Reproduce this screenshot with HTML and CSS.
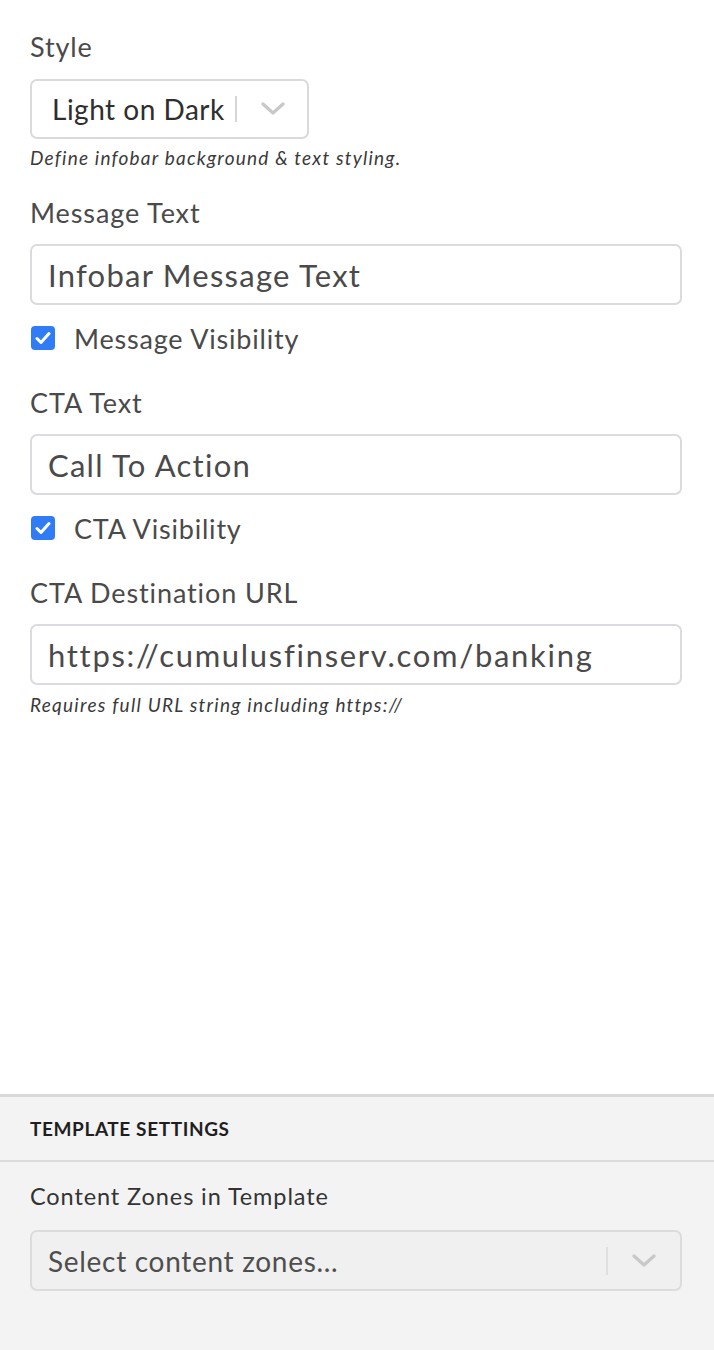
FILE: index.html
```html
<!DOCTYPE html>
<html>
<head>
<meta charset="utf-8">
<link rel="stylesheet" href="styles.css">
</head>
<body>
<div class="page">
  <main class="editor">
    <div class="field-label first">Style</div>
    <div class="select style-select">
      <span class="select-value">Light on Dark</span>
      <span class="select-sep"></span>
      <svg class="chev" width="24" height="14" viewBox="0 0 24 14"><path d="M2 2 L12 11 L22 2" fill="none" stroke="#c8c8c8" stroke-width="3.2" stroke-linecap="round" stroke-linejoin="round"/></svg>
    </div>
    <div class="hint">Define infobar background &amp; text styling.</div>

    <div class="field-label">Message Text</div>
    <div class="input">Infobar Message Text</div>
    <div class="check-row">
      <span class="checkbox"><svg width="16" height="14" viewBox="0 0 16 14"><path d="M2 7.5 L6 11.5 L14 2.5" fill="none" stroke="#fff" stroke-width="3" stroke-linecap="round" stroke-linejoin="round"/></svg></span>
      <span class="check-label">Message Visibility</span>
    </div>

    <div class="field-label">CTA Text</div>
    <div class="input">Call To Action</div>
    <div class="check-row">
      <span class="checkbox"><svg width="16" height="14" viewBox="0 0 16 14"><path d="M2 7.5 L6 11.5 L14 2.5" fill="none" stroke="#fff" stroke-width="3" stroke-linecap="round" stroke-linejoin="round"/></svg></span>
      <span class="check-label">CTA Visibility</span>
    </div>

    <div class="field-label">CTA Destination URL</div>
    <div class="input url">https://cumulusfinserv.com/banking</div>
    <div class="hint small">Requires full URL string including https://</div>
  </main>

  <section class="template">
    <div class="template-head">TEMPLATE SETTINGS</div>
    <div class="template-body">
      <div class="zones-label">Content Zones in Template</div>
      <div class="select zones-select">
        <span class="select-value placeholder">Select content zones...</span>
        <span class="select-sep"></span>
        <svg class="chev" width="24" height="14" viewBox="0 0 24 14"><path d="M2 2 L12 11 L22 2" fill="none" stroke="#c8c8c8" stroke-width="3.2" stroke-linecap="round" stroke-linejoin="round"/></svg>
      </div>
    </div>
  </section>
</div>
</body>
</html>
```

FILE: styles.css
```css
* { box-sizing: border-box; }
html, body { margin: 0; padding: 0; background: #fff; }
body {
  font-family: Lato, "Open Sans", "Liberation Sans", sans-serif;
  color: #4a4a4a;
}
.page {
  min-height: 100vh;
  display: flex;
  flex-direction: column;
}
.editor {
  padding: 0 32px 0 30px;
  display: flex;
  flex-direction: column;
  align-items: flex-start;
}
.field-label {
  font-size: 27px;
  line-height: 32px;
  letter-spacing: 0.9px;
  margin-top: 28px;
  color: #4a4a4a;
}
.field-label.first { margin-top: 31px; }
.check-row + .field-label { margin-top: 33px; }
.select {
  display: flex;
  align-items: center;
  height: 60px;
  border: 2px solid #dadada;
  border-radius: 7px;
  margin-top: 16px;
  padding: 0 20px 0 20px;
}
.style-select { width: 279px; }
.select-value {
  font-size: 28px;
  letter-spacing: 0.5px;
  color: #2e2e2e;
  flex: 1;
  white-space: nowrap;
}
.select-sep {
  width: 2px;
  height: 26px;
  background: #d6d6d6;
  margin: 0 22px 0 8px;
}
.style-select .select-value { flex: 0 0 auto; }
.style-select .select-sep { margin: 0 24px 0 10px; }
.chev { display: block; }
.hint {
  font-size: 19px;
  line-height: 22px;
  letter-spacing: 1.2px;
  font-style: italic;
  margin-top: 8px;
  color: #3a3a3a;
}
.hint.small { margin-top: 9px; letter-spacing: 1.25px; }
.input {
  width: 100%;
  height: 61px;
  border: 2px solid #d9dbde;
  border-radius: 7px;
  margin-top: 15px;
  padding: 0 16px;
  display: flex;
  align-items: center;
  font-size: 31px;
  letter-spacing: 1.25px;
  color: #4a4a4a;
  white-space: nowrap;
}
.input.url { letter-spacing: 1.7px; }
.check-row {
  display: flex;
  align-items: center;
  height: 32px;
  margin-top: 17px;
  margin-left: 1px;
}
.checkbox {
  width: 24px;
  height: 24px;
  border-radius: 4px;
  background: #2f7cf6;
  display: flex;
  align-items: center;
  justify-content: center;
}
.check-label {
  font-size: 27px;
  letter-spacing: 0.8px;
  margin-left: 19px;
  color: #4a4a4a;
}
.template {
  margin-top: auto;
  background: #f3f3f3;
  border-top: 3px solid #d9d9d9;
}
.template-head {
  height: 65px;
  border-bottom: 2px solid #dcdcdc;
  padding: 0 30px;
  display: flex;
  align-items: center;
  font-size: 19px;
  font-weight: 700;
  color: #1f1f1f;
  letter-spacing: 0.6px;
}
.template-body {
  padding: 19px 32px 59px 30px;
}
.zones-label {
  font-size: 23.5px;
  line-height: 30px;
  letter-spacing: 0.9px;
  color: #333;
}
.zones-select {
  width: 100%;
  height: 61px;
  margin-top: 19px;
  background: #f0f0f0;
  border-color: #dcdcdc;
  padding: 0 24px 0 16px;
}
.zones-select .select-value { letter-spacing: 0.7px; }
.placeholder { color: #4e4e4e; }
.zones-select .select-sep { margin: 0 24px 0 0; height: 28px; background: #e0e0e0; }
```
